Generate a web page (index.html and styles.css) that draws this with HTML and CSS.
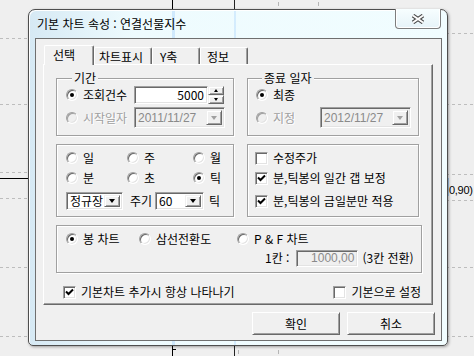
FILE: index.html
```html
<!DOCTYPE html>
<html lang="ko">
<head>
  <meta charset="UTF-8">
  <meta name="viewport" content="width=device-width, initial-scale=1.0">
  <title>기본 차트 속성</title>
  <link rel="stylesheet" href="styles.css">
</head>
<body>
  <!-- chart behind the dialog -->
  <div class="chart">
    <div class="vline vline-a"></div>
    <div class="vline vline-b"></div>
    <div class="tick tick-1"></div>
    <div class="tick tick-2"></div>
    <div class="tick tick-3"></div>
    <div class="tick tick-4"></div>
    <div class="btick"></div>
    <div class="dash left d1"></div>
    <div class="dash left d2"></div>
    <div class="dash left d3"></div>
    <div class="dash left d4"></div>
    <div class="dash left d5"></div>
    <div class="dash left d6"></div>
    <div class="dash right r1"></div>
    <div class="dash right r2"></div>
    <div class="dash right r3"></div>
    <div class="dash right r4"></div>
    <div class="dash right r5"></div>
    <div class="dash right r6"></div>
    <div class="hline"></div>
    <div class="marker"></div>
    <span class="axis-label">0,90)</span>
  </div>

  <div class="window">
    <div class="titlebar">
      <span class="title">기본 차트 속성 : 연결선물지수</span>
      <div class="close-btn">
        <svg width="14" height="10" viewBox="0 0 14 10">
          <path d="M2 1.5L12 8.5M12 1.5L2 8.5" stroke="#4b4b4b" stroke-width="4"/>
          <path d="M2 1.5L12 8.5M12 1.5L2 8.5" stroke="#fff" stroke-width="2"/>
        </svg>
      </div>
    </div>

    <div class="client">
      <div class="tabs">
        <div class="tab active">선택</div>
        <div class="tab tab-2">차트표시</div>
        <div class="tab tab-3">Y축</div>
        <div class="tab tab-4">정보</div>
      </div>

      <div class="panel">
        <div class="row">
          <fieldset class="group period">
            <legend>기간</legend>
            <div class="line">
              <span class="radio checked"></span>
              <span class="lbl fixed">조회건수</span>
              <span class="edit count">5000</span>
              <span class="spin">
                <span class="spin-btn"><i class="arrow-up"></i></span>
                <span class="spin-btn"><i class="arrow-down"></i></span>
              </span>
            </div>
            <div class="line line-2">
              <span class="radio off"></span>
              <span class="lbl fixed off">시작일자</span>
              <span class="combo off date">
                <span class="combo-text">2011/11/27</span>
                <span class="drop"><i class="arrow-drop"></i></span>
              </span>
            </div>
          </fieldset>

          <fieldset class="group end-date">
            <legend>종료 일자</legend>
            <div class="line">
              <span class="radio checked"></span>
              <span class="lbl">최종</span>
            </div>
            <div class="line line-2 spread">
              <span class="opt">
                <span class="radio off"></span>
                <span class="lbl off">지정</span>
              </span>
              <span class="combo off date">
                <span class="combo-text">2012/11/27</span>
                <span class="drop"><i class="arrow-drop"></i></span>
              </span>
            </div>
          </fieldset>
        </div>

        <div class="row row-mid">
          <fieldset class="group period-type">
            <div class="type-grid">
              <span class="opt"><span class="radio"></span><span class="lbl">일</span></span>
              <span class="opt"><span class="radio"></span><span class="lbl">주</span></span>
              <span class="opt"><span class="radio"></span><span class="lbl">월</span></span>
              <span class="opt"><span class="radio"></span><span class="lbl">분</span></span>
              <span class="opt"><span class="radio"></span><span class="lbl">초</span></span>
              <span class="opt"><span class="radio checked"></span><span class="lbl">틱</span></span>
            </div>
            <div class="line cycle">
              <span class="combo session">
                <span class="combo-text">정규장</span>
                <span class="drop"><i class="arrow-drop"></i></span>
              </span>
              <span class="lbl cycle-lbl">주기</span>
              <span class="combo cycle-val">
                <span class="combo-text">60</span>
                <span class="drop"><i class="arrow-drop"></i></span>
              </span>
              <span class="lbl tick-lbl">틱</span>
            </div>
          </fieldset>

          <fieldset class="group options">
            <div class="check-line">
              <span class="check"></span>
              <span class="lbl">수정주가</span>
            </div>
            <div class="check-line">
              <span class="check on"><svg width="9" height="9" viewBox="0 0 9 9"><path d="M1 3.5L3.5 6L8 1.5" stroke="#000" stroke-width="2" fill="none"/></svg></span>
              <span class="lbl">분,틱봉의 일간 갭 보정</span>
            </div>
            <div class="check-line third">
              <span class="check on"><svg width="9" height="9" viewBox="0 0 9 9"><path d="M1 3.5L3.5 6L8 1.5" stroke="#000" stroke-width="2" fill="none"/></svg></span>
              <span class="lbl">분,틱봉의 금일분만 적용</span>
            </div>
          </fieldset>
        </div>

        <fieldset class="group chart-type">
          <div class="line">
            <span class="opt bong"><span class="radio checked"></span><span class="lbl">봉 차트</span></span>
            <span class="opt three"><span class="radio"></span><span class="lbl">삼선전환도</span></span>
            <span class="opt"><span class="radio"></span><span class="lbl">P &amp; F 차트</span></span>
          </div>
          <div class="line box-line">
            <span class="lbl">1칸 :</span>
            <span class="edit off box-size">1000,00</span>
            <span class="lbl">(3칸 전환)</span>
          </div>
        </fieldset>

        <div class="bottom-line">
          <span class="check-line">
            <span class="check on"><svg width="9" height="9" viewBox="0 0 9 9"><path d="M1 3.5L3.5 6L8 1.5" stroke="#000" stroke-width="2" fill="none"/></svg></span>
            <span class="lbl">기본차트 추가시 항상 나타나기</span>
          </span>
          <span class="check-line">
            <span class="check"></span>
            <span class="lbl">기본으로 설정</span>
          </span>
        </div>
      </div>

      <div class="buttons">
        <button class="btn">확인</button>
        <button class="btn">취소</button>
      </div>
    </div>
  </div>
</body>
</html>
```

FILE: styles.css
```css
* {
  box-sizing: border-box;
  margin: 0;
  padding: 0;
}
body {
  position: relative;
  width: 474px;
  height: 356px;
  overflow: hidden;
  background: #efefef;
  font-family: "Noto Sans CJK KR", "Noto Sans", sans-serif;
  font-size: 12px;
  line-height: 14px;
  color: #000;
}

/* background chart */
.chart {
  position: absolute;
  inset: 0;
}
.vline {
  position: absolute;
  top: 0;
  bottom: 0;
  width: 1px;
  background: #000;
}
.vline-a { left: 172px; }
.vline-b { left: 234px; background: #222; }
.tick {
  position: absolute;
  width: 1px;
  height: 4px;
  background: #b5b5b5;
}
.tick-1 { left: 278px; top: 2px; }
.tick-2 { left: 318px; top: 2px; }
.tick-3 { left: 238px; top: 350px; }
.tick-4 { left: 278px; top: 350px; }
.btick {
  position: absolute;
  left: 172px;
  top: 349px;
  width: 4px;
  height: 1px;
  background: #000;
}
.dash {
  position: absolute;
  height: 1px;
  background: repeating-linear-gradient(to right, #bdbdbd 0 3px, transparent 3px 6px);
}
.dash.left { left: 0; width: 30px; }
.dash.right { left: 446px; width: 28px; }
.d1 { top: 38px; }
.d2 { top: 104px; }
.d3 { top: 172px; }
.d4 { top: 198px; }
.d5 { top: 267px; }
.d6 { top: 336px; }
.r1 { top: 33px; }
.r2 { top: 104px; }
.r3 { top: 174px; }
.r4 { top: 200px; }
.r5 { top: 267px; }
.r6 { top: 336px; }
.hline {
  position: absolute;
  left: 0;
  top: 178px;
  width: 30px;
  height: 1px;
  background: #000;
}
.marker {
  position: absolute;
  left: 445px;
  top: 178px;
  width: 4px;
  height: 18px;
  background: #a9cdf0;
}
.axis-label {
  position: absolute;
  left: 449px;
  top: 183px;
  font-family: "Liberation Sans", sans-serif;
  font-size: 11px;
  letter-spacing: -0.3px;
}

/* dialog window */
.window {
  position: absolute;
  left: 28px;
  top: 9px;
  width: 420px;
  height: 337px;
  padding: 0 5px 4px 6px;
  border: 1px solid #4e4e4e;
  border-radius: 7px 7px 5px 5px;
  background:
    linear-gradient(to right, transparent 143px, rgba(150, 200, 250, 0.35) 143px 146px, transparent 146px 205px, rgba(150, 200, 250, 0.3) 205px 207px, transparent 207px),
    linear-gradient(to right, #d6e9f4, #eefbfe 25%, #f1fdff);
  box-shadow: 1px 1px 3px rgba(0, 0, 0, 0.35), inset 1px 1px 0 #fff;
}
.titlebar {
  display: flex;
  align-items: center;
  height: 28px;
  padding-left: 2px;
}
.title {
  color: #000;
}
.close-btn {
  display: flex;
  align-items: center;
  justify-content: center;
  align-self: flex-start;
  width: 46px;
  height: 20px;
  margin: -1px 1px 0 auto;
  border: 1px solid #7d7d7d;
  border-top: none;
  border-radius: 0 0 4px 4px;
  background: linear-gradient(#f7feff, #e6f3f8);
  box-shadow: inset 1px 0 0 #fff, inset -1px -1px 0 #fff;
}
.close-btn svg {
  margin-top: 1px;
}

.client {
  height: 303px;
  padding: 6px 0 0 7px;
  border: 1px solid #6f6f6f;
  background: #f0f0f0;
}

/* tabs */
.tabs {
  display: flex;
  align-items: flex-end;
  height: 19px;
  padding-left: 1px;
}
.tab {
  position: relative;
  height: 17px;
  padding: 2px 0 0 6px;
  border-top: 1px solid #fff;
  border-left: 1px solid #fff;
  border-right: 1px solid #696969;
  box-shadow: inset -1px 0 0 #a0a0a0;
  background: #f0f0f0;
  border-radius: 2px 2px 0 0;
}
.tab.active {
  z-index: 1;
  width: 50px;
  height: 20px;
  margin-bottom: -1px;
  padding: 2px 0 0 8px;
}
.tab-2 { width: 58px; padding-left: 4px; }
.tab-3 { width: 48px; padding-left: 7px; }
.tab-4 { width: 48px; }

.panel {
  display: flex;
  flex-direction: column;
  width: 390px;
  height: 241px;
  padding: 6px 0 0 12px;
  border: 1px solid #fff;
  border-right-color: #696969;
  border-bottom-color: #696969;
  box-shadow: inset -1px -1px 0 #a0a0a0;
}
.row {
  display: flex;
  gap: 13px;
}
.row-mid {
  margin-top: 8px;
}

/* group boxes */
.group {
  border: 1px solid #a0a0a0;
  box-shadow: inset 1px 1px 0 #fff, 1px 1px 0 #fff;
  min-width: 0;
}
.group legend {
  margin-left: 6px;
  padding: 0 2px;
  line-height: 14px;
  background: #f0f0f0;
}
.period {
  width: 178px;
  height: 65px;
  padding: 1px 0 0 9px;
}
.end-date {
  width: 172px;
  height: 65px;
  padding: 1px 7px 0 8px;
}
.period-type {
  width: 178px;
  height: 73px;
  padding: 3px 0 0 9px;
}
.options {
  width: 172px;
  height: 73px;
  padding: 3px 0 0 7px;
}
.chart-type {
  width: 366px;
  height: 48px;
  margin-top: 8px;
  padding: 3px 0 0 9px;
}

.line {
  display: flex;
  align-items: center;
  height: 18px;
}
.line-2 {
  height: 21px;
  margin-top: 3px;
}
.spread {
  justify-content: space-between;
}
.opt {
  display: flex;
  align-items: center;
}
.lbl {
  white-space: nowrap;
}
.lbl.fixed {
  width: 51px;
}
.lbl.off {
  color: #a0a0a0;
  text-shadow: 1px 1px 0 #fff;
}

/* radio buttons */
.radio {
  display: inline-flex;
  align-items: center;
  justify-content: center;
  flex: none;
  width: 12px;
  height: 12px;
  margin-right: 5px;
  border: 1px solid;
  border-color: #a0a0a0 #fff #fff #a0a0a0;
  border-radius: 50%;
  background: #fff;
  box-shadow: inset 1px 1px 0 #696969, inset -1px -1px 0 #e3e3e3;
}
.radio.checked::after {
  content: "";
  width: 4px;
  height: 4px;
  border-radius: 50%;
  background: #000;
}
.radio.off {
  background: #f0f0f0;
  box-shadow: inset 1px 1px 0 #a0a0a0, inset -1px -1px 0 #e3e3e3;
}

/* check boxes */
.check-line {
  display: flex;
  align-items: center;
  height: 20px;
}
.check-line.third {
  margin-top: 3px;
}
.check {
  display: inline-flex;
  align-items: center;
  justify-content: center;
  flex: none;
  width: 13px;
  height: 13px;
  margin-right: 5px;
  border: 1px solid;
  border-color: #a0a0a0 #fff #fff #a0a0a0;
  background: #fff;
  box-shadow: inset 1px 1px 0 #696969, inset -1px -1px 0 #e3e3e3;
}

/* edit fields and combos */
.edit,
.combo {
  display: flex;
  align-items: center;
  border: 1px solid;
  border-color: #a0a0a0 #fff #fff #a0a0a0;
  background: #fff;
  box-shadow: inset 1px 1px 0 #696969, inset -1px -1px 0 #e3e3e3;
}
.edit {
  justify-content: flex-end;
  height: 18px;
  padding-right: 3px;
}
.edit.count {
  width: 74px;
}
.edit.off {
  color: #8a8a8a;
  background: #f0f0f0;
}
.spin {
  display: flex;
  flex-direction: column;
  width: 16px;
  height: 18px;
}
.spin-btn {
  display: flex;
  align-items: center;
  justify-content: center;
  height: 9px;
  border: 1px solid;
  border-color: #f0f0f0 #696969 #696969 #f0f0f0;
  background: #f0f0f0;
  box-shadow: inset 1px 1px 0 #fff, inset -1px -1px 0 #a0a0a0;
}
.arrow-up,
.arrow-down {
  width: 1px;
  border-left: 2px solid transparent;
  border-right: 2px solid transparent;
}
.arrow-up { border-bottom: 3px solid #000; }
.arrow-down { border-top: 3px solid #000; }

.combo {
  justify-content: space-between;
  height: 18px;
  padding: 2px;
}
.combo.date {
  width: 91px;
  height: 21px;
}
.combo.off {
  color: #8a8a8a;
  background: #f0f0f0;
}
.combo-text {
  padding-left: 1px;
  font-family: "Liberation Sans", "Noto Sans CJK KR", sans-serif;
}
.session .combo-text,
.cycle-val .combo-text {
  font-family: "Noto Sans CJK KR", sans-serif;
}
.drop {
  display: flex;
  align-items: center;
  justify-content: center;
  width: 16px;
  height: 100%;
  border: 1px solid;
  border-color: #f0f0f0 #696969 #696969 #f0f0f0;
  background: #f0f0f0;
  box-shadow: inset 1px 1px 0 #fff, inset -1px -1px 0 #a0a0a0;
}
.arrow-drop {
  width: 1px;
  border-top: 4px solid #000;
  border-left: 3px solid transparent;
  border-right: 3px solid transparent;
}
.combo.off .arrow-drop {
  border-top-color: #a0a0a0;
}

/* period type group */
.type-grid {
  display: grid;
  grid-template-columns: 61px 66px auto;
  grid-auto-rows: 20px;
  align-items: center;
}
.cycle {
  height: 18px;
  margin-top: 4px;
}
.session {
  width: 57px;
}
.cycle-lbl {
  margin: 0 3px 0 7px;
}
.cycle-val {
  width: 49px;
}
.tick-lbl {
  margin-left: 5px;
}

/* chart type group */
.chart-type .line {
  height: 20px;
}
.bong { width: 73px; }
.three { width: 98px; }
.chart-type .box-line {
  height: 18px;
  padding-left: 199px;
}
.box-size {
  width: 62px;
  height: 17px;
  margin: 0 4px 0 7px;
  font-family: "Liberation Sans", sans-serif;
}

.bottom-line {
  display: flex;
  justify-content: space-between;
  margin-top: 9px;
  padding: 0 11px 0 7px;
}

/* buttons */
.buttons {
  display: flex;
  justify-content: flex-end;
  gap: 7px;
  margin-top: 7px;
  padding-right: 6px;
}
.btn {
  width: 88px;
  height: 23px;
  font: inherit;
  color: #000;
  border: 1px solid;
  border-color: #fff #696969 #696969 #fff;
  background: #f0f0f0;
  box-shadow: inset 1px 1px 0 #f0f0f0, inset -1px -1px 0 #a0a0a0;
}
```
